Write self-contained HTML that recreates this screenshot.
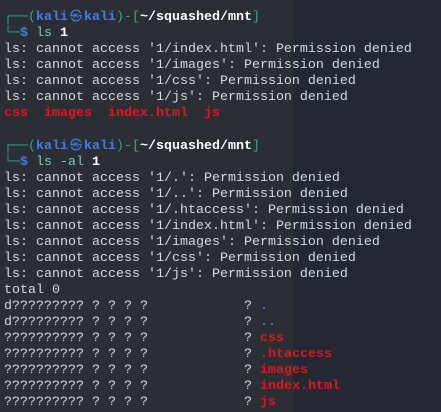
<!DOCTYPE html>
<html><head><meta charset="utf-8"><style>
html,body{margin:0;padding:0;width:441px;height:412px;overflow:hidden;background:#232833}
#l{position:absolute;left:0;top:0;width:293px;height:412px;background:#2b2e35}
pre{position:absolute;left:4px;top:9px;margin:0;font-family:"Liberation Mono","DejaVu Sans Mono",monospace;font-size:13.33px;line-height:16px;color:#d3dae3;white-space:pre}
.g{color:#2fa88a}.b{color:#3f7ee8;font-weight:bold}.w{color:#fff;font-weight:bold}.c{color:#7fc9c0}
.r{color:#e0161b;font-weight:bold}.d{color:#3f7ee8;font-weight:bold}
.k{display:inline-block;width:16px;text-align:center;font-size:12px;font-weight:normal}
</style></head><body><div id="l"></div><pre><span class="g">┌──(</span><span class="b">kali<span class="k">㉿</span>kali</span><span class="g">)-[</span><span class="w">~/squashed/mnt</span><span class="g">]</span>
<span class="g">└─</span><span class="b">$</span> <span class="c">ls</span> <span class="w">1</span>
ls: cannot access '1/index.html': Permission denied
ls: cannot access '1/images': Permission denied
ls: cannot access '1/css': Permission denied
ls: cannot access '1/js': Permission denied
<span class="r">css</span>  <span class="r">images</span>  <span class="r">index.html</span>  <span class="r">js</span>

<span class="g">┌──(</span><span class="b">kali<span class="k">㉿</span>kali</span><span class="g">)-[</span><span class="w">~/squashed/mnt</span><span class="g">]</span>
<span class="g">└─</span><span class="b">$</span> <span class="c">ls -al</span> <span class="w">1</span>
ls: cannot access '1/.': Permission denied
ls: cannot access '1/..': Permission denied
ls: cannot access '1/.htaccess': Permission denied
ls: cannot access '1/index.html': Permission denied
ls: cannot access '1/images': Permission denied
ls: cannot access '1/css': Permission denied
ls: cannot access '1/js': Permission denied
total 0
d????????? ? ? ? ?            ? <span class="d">.</span>
d????????? ? ? ? ?            ? <span class="d">..</span>
?????????? ? ? ? ?            ? <span class="r">css</span>
?????????? ? ? ? ?            ? <span class="r">.htaccess</span>
?????????? ? ? ? ?            ? <span class="r">images</span>
?????????? ? ? ? ?            ? <span class="r">index.html</span>
?????????? ? ? ? ?            ? <span class="r">js</span></pre></body></html>
